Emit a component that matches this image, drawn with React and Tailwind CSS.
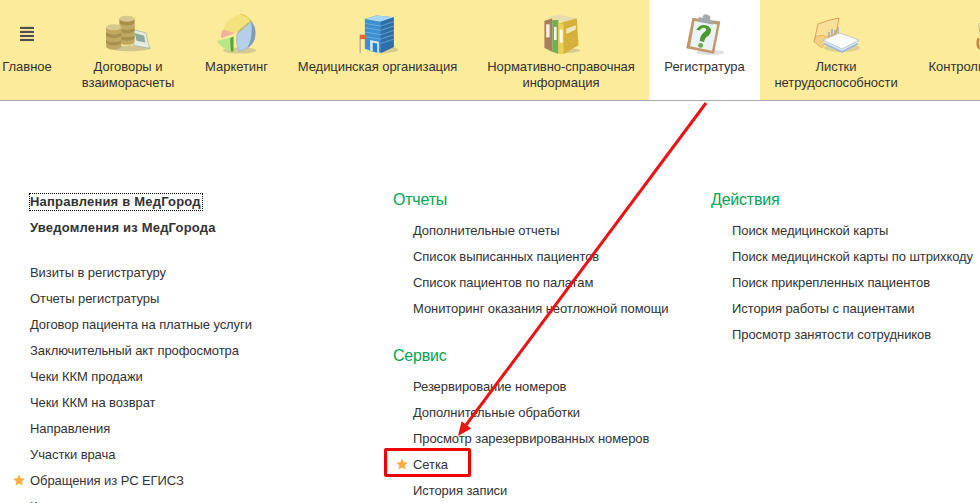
import { Fragment } from "react";

function MenuIcon() {
  return (
    <svg width="42" height="42" viewBox="0 0 48 48">
      <g fill="#4d4d4d">
        <rect x="16" y="17" width="16" height="2.4" />
        <rect x="16" y="21.6" width="16" height="2.4" />
        <rect x="16" y="26.2" width="16" height="2.4" />
        <rect x="16" y="30.8" width="16" height="2.4" />
      </g>
    </svg>
  );
}

function Stack({ x, y, rows }) {
  const items = [];
  for (let i = 0; i < rows; i++) {
    items.push(
      <Fragment key={i}>
        <path
          d={`M${x - 8} ${y - i * 4} v4 a8 3.4 0 0 0 16 0 v-4 Z`}
          fill={i % 2 ? "#a8914e" : "#bfa862"}
        />
        <ellipse cx={x} cy={y - i * 4} rx="8" ry="3.2" fill="#d8c98a" />
      </Fragment>
    );
  }
  return <g>{items}</g>;
}

function CoinsIcon() {
  return (
    <svg width="46" height="42" viewBox="0 0 48 44">
      <ellipse cx="26" cy="38" rx="22" ry="3" fill="#bfb48a" opacity=".7" />
      <path d="M28 18 L43 22 Q44 30 47 38 L30 35 Z" fill="#e6ecdf" stroke="#9fb2a5" strokeWidth=".7" />
      <path d="M31 22 L41 25 L42 32 L33 30 Z" fill="#8aa99a" />
      <Stack x="23" y="27" rows="6" />
      <Stack x="9" y="32" rows="5" />
    </svg>
  );
}

function PieIcon() {
  return (
    <svg width="42" height="42" viewBox="0 0 48 48">
      <ellipse cx="27" cy="44" rx="19" ry="3.5" fill="#c8bd8c" opacity=".7" />
      <path d="M24 25 L28 2 Q38 4 43 14 Z" fill="#d9bf55" />
      <path d="M22 24 L8 22 Q12 6 28 3 Q36 4 39 10 Z" fill="#f3e27e" />
      <path d="M22 24 L6 30 Q5 26 8 20 Z" fill="#f0b199" />
      <path d="M24 25 L40 11 Q47 18 44 31 Q40 42 26 45 Q22 36 24 25 Z" fill="#b4cfe6" stroke="#8aa6c4" strokeWidth=".6" />
      <path d="M40 11 Q47 18 44 31 Q42 37 36 41 Q43 26 40 11 Z" fill="#7f9cb8" />
      <path d="M20 28 L20 45 Q8 44 1 33 Z" fill="#b9e58b" />
      <path d="M20 28 L20 45 L17 45 L16 30 Z" fill="#58a63a" />
    </svg>
  );
}

function BuildingIcon() {
  return (
    <svg width="42" height="42" viewBox="0 0 48 48">
      <ellipse cx="30" cy="43" rx="17" ry="4" fill="#c8bd8c" opacity=".7" />
      <path d="M9 8 L22 4 L42 6 L42 40 L24 47 L9 42 Z" fill="#3d8fd0" />
      <path d="M9 8 L22 4 L42 6 L27 11 Z" fill="#a9d6f2" />
      <path d="M27 11 L42 6 L42 40 L27 47 Z" fill="#2f6eaa" />
      <g stroke="#8cc4ea" strokeWidth=".8" opacity=".8">
        <path d="M9 13 L27 16 M9 18 L27 21 M9 23 L27 26 M9 28 L27 31 M27 16 L42 11 M27 21 L42 16 M27 26 L42 21 M27 31 L42 26 M27 36 L42 31" />
      </g>
      <path d="M15 32 L25 34 L25 47 L15 44 Z" fill="#d6e4ec" />
      <path d="M18 35 L23 36 L23 46 L18 45 Z" fill="#2a82c2" />
      <rect x="3" y="26" width="1.2" height="21" fill="#a59c86" />
      <rect x="3.5" y="26" width="7" height="5" fill="#e46a33" />
    </svg>
  );
}

function FoldersIcon() {
  return (
    <svg width="42" height="42" viewBox="0 0 48 48">
      <ellipse cx="28" cy="44" rx="18" ry="3" fill="#c8bd8c" opacity=".7" />
      <path d="M8 6 L20 3 L43 7 L27 11 Z" fill="#e9dcae" />
      <path d="M5 10 L14 7 L14 45 L5 41 Z" fill="#a87f5d" />
      <rect x="7" y="14" width="4" height="15" fill="#f4efe3" />
      <path d="M14 9 L21 9 L21 48 L14 45 Z" fill="#74ad53" />
      <rect x="16" y="17" width="3" height="15" fill="#f2f6ea" />
      <path d="M21 13 L42 7 L44 38 L27 48 L21 47 Z" fill="#d5b03a" />
      <path d="M21 13 L27 13 L27 48 L21 47 Z" fill="#ead258" />
      <rect x="22.5" y="20" width="3.5" height="15" fill="#fbf7e4" />
      <path d="M30 19 L41 15 L41 20 L30 25 Z" fill="#ece5bf" />
    </svg>
  );
}

function ClipboardIcon() {
  return (
    <svg width="42" height="44" viewBox="0 0 48 50">
      <ellipse cx="30" cy="46" rx="16" ry="3" fill="#c9c9c9" opacity=".6" />
      <path d="M10 7 L41 11 L34 47 L3 41 Z" fill="#c39a69" stroke="#a67f50" strokeWidth=".6" />
      <path d="M12 10 L38 14 L32 44 L7 39 Z" fill="#eaf3f8" />
      <path d="M17 5 L21 7 Q22 1 27 3 Q31 4 30 9 L34 11 L33 14 L16 11 Z" fill="#a5a9ac" />
      <path d="M14 20 Q19 12 28 16 Q34 20 28 27 Q23 30 23 34 L18 33 Q18 27 23 23 Q27 20 24 18 Q20 17 18 21 Z" fill="#4e9a2f" />
      <circle cx="19" cy="38" r="2.8" fill="#6aac45" />
    </svg>
  );
}

function PapersIcon() {
  return (
    <svg width="48" height="42" viewBox="0 0 48 42">
      <ellipse cx="30" cy="36" rx="18" ry="4" fill="#c8bd8c" opacity=".6" />
      <path d="M2 30 L6 12 Q16 8 27 6 L24 22 Z" fill="#f8e09a" stroke="#d9a24f" />
      <path d="M2 30 L4 24 Q12 22 18 26 L10 36 Z" fill="#f4cf82" stroke="#d9a24f" strokeWidth=".6" />
      <path d="M11 32 L28 25 L47 32 L30 41 Z" fill="#9dbbd8" />
      <path d="M11 30 L28 23 L47 30 L30 39 Z" fill="#dbe7f2" />
      <path d="M11 28 L28 21 L47 28 L30 37 Z" fill="#fbfbf7" stroke="#8ca7c4" strokeWidth=".5" />
      <path d="M17 24 v-4 M20 23 v-6 M23 22 v-4 M26 21 v-6" stroke="#9aa6b0" strokeWidth="1.4" />
    </svg>
  );
}

function PartialIcon() {
  return (
    <svg width="42" height="42" viewBox="0 0 48 48">
      <path d="M3 30 Q0 40 6 42 Q10 44 14 40" fill="none" stroke="#bd8a45" strokeWidth="3" />
      <path d="M3 14 Q12 6 30 10 L28 46 L6 34 Z" fill="#f4efdc" stroke="#bdb38c" />
    </svg>
  );
}

const TABS = [
  { label: ["Главное"], icon: MenuIcon, className: "w-[65px] pr-[11px]" },
  { label: ["Договоры и", "взаиморасчеты"], icon: CoinsIcon, className: "w-[126px]" },
  { label: ["Маркетинг"], icon: PieIcon, className: "w-[91px]" },
  { label: ["Медицинская организация"], icon: BuildingIcon, className: "w-[191px]" },
  { label: ["Нормативно-справочная", "информация"], icon: FoldersIcon, className: "w-[176px]" },
  { label: ["Регистратура"], icon: ClipboardIcon, className: "w-[111px] bg-white" },
  { label: ["Листки", "нетрудоспособности"], icon: PapersIcon, className: "w-[152px]" },
  { label: ["Контрольно-кассовая"], icon: PartialIcon, className: "w-[170px]", labelClass: "-ml-[8px]" },
];

const LEFT_BOLD = ["Направления в МедГород", "Уведомления из МедГорода"];
const LEFT_ITEMS = [
  { text: "Визиты в регистратуру" },
  { text: "Отчеты регистратуры" },
  { text: "Договор пациента на платные услуги" },
  { text: "Заключительный акт профосмотра" },
  { text: "Чеки ККМ продажи" },
  { text: "Чеки ККМ на возврат" },
  { text: "Направления" },
  { text: "Участки врача" },
  { text: "Обращения из РС ЕГИСЗ", star: true },
  { text: "Карты" },
];
const REPORTS = [
  { text: "Дополнительные отчеты" },
  { text: "Список выписанных пациентов" },
  { text: "Список пациентов по палатам" },
  { text: "Мониторинг оказания неотложной помощи" },
];
const SERVICE = [
  { text: "Резервирование номеров" },
  { text: "Дополнительные обработки" },
  { text: "Просмотр зарезервированных номеров" },
  { text: "Сетка", star: true },
  { text: "История записи" },
];
const ACTIONS = [
  { text: "Поиск медицинской карты" },
  { text: "Поиск медицинской карты по штрихкоду" },
  { text: "Поиск прикрепленных пациентов" },
  { text: "История работы с пациентами" },
  { text: "Просмотр занятости сотрудников" },
];

function Star() {
  return (
    <svg className="absolute left-[-17px] top-[6px]" width="12" height="12" viewBox="0 0 24 24">
      <path d="M12 1 L15.3 8.6 L23.5 9.4 L17.3 14.9 L19.1 23 L12 18.8 L4.9 23 L6.7 14.9 L0.5 9.4 L8.7 8.6 Z" fill="#f9ad3c" />
    </svg>
  );
}

function LinkList({ items }) {
  return (
    <ul className="flex flex-col tracking-[-0.08px]">
      {items.map((item) => (
        <li key={item.text} className="relative h-[26px] leading-[26px] whitespace-nowrap">
          {item.star && <Star />}
          {item.text}
        </li>
      ))}
    </ul>
  );
}

function Heading({ children, className = "-ml-[20px]" }) {
  return <h2 className={`h-[26px] leading-[26px] text-[16px] tracking-[-0.2px] text-[#00a650] ${className}`}>{children}</h2>;
}

export default function App() {
  return (
    <div className="relative h-[503px] w-[980px] overflow-hidden bg-white text-[13px] text-[#333333] font-['Liberation_Sans',Arial,sans-serif]">
      <nav className="flex h-[101px] overflow-hidden border-b border-[#a9a9a9] bg-[#fbeb9b]">
        {TABS.map((tab) => {
          const Icon = tab.icon;
          return (
            <div
              key={tab.label[0]}
              className={`flex shrink-0 flex-col items-center pt-[12px] tracking-[-0.05px] ${tab.className}`}
            >
              <div className="flex h-[42px] items-start justify-center">
                <Icon />
              </div>
              <div className={`mt-[5px] text-center leading-[16px] whitespace-nowrap ${tab.labelClass || ""}`}>
                {tab.label.map((line) => (
                  <div key={line}>{line}</div>
                ))}
              </div>
            </div>
          );
        })}
      </nav>

      <main className="flex pt-[86px]">
        <section className="w-[413px] pl-[30px]">
          <div className="pt-[1px] font-bold tracking-[0.2px]">
            <div className="h-[26px] leading-[26px]">
              <span className="-ml-[1px] inline-block h-[18px] border border-dotted border-black pr-[1px] align-middle leading-[16px]">
                {LEFT_BOLD[0]}
              </span>
            </div>
            <div className="mt-[1px] h-[26px] leading-[26px]">{LEFT_BOLD[1]}</div>
          </div>
          <div className="mt-[19px]">
            <LinkList items={LEFT_ITEMS} />
          </div>
        </section>
        <section className="w-[319px]">
          <Heading>Отчеты</Heading>
          <div className="mt-[5px]">
            <LinkList items={REPORTS} />
          </div>
          <div className="mt-[21px]">
            <Heading>Сервис</Heading>
          </div>
          <div className="mt-[5px]">
            <LinkList items={SERVICE} />
          </div>
        </section>
        <section>
          <Heading className="-ml-[21px]">Действия</Heading>
          <div className="mt-[5px]">
            <LinkList items={ACTIONS} />
          </div>
        </section>
      </main>

      {/* annotation drawn over the screenshot */}
      <div className="absolute left-[384px] top-[448px] h-[29px] w-[87px] rounded-[2px] border-[3px] border-[#f00000]" />
      <svg className="absolute left-0 top-0 pointer-events-none" width="980" height="503" viewBox="0 0 980 503">
        <line x1="706" y1="103" x2="466" y2="425" stroke="#ee1111" strokeWidth="3" />
        <path d="M458 436 L461.6 421.2 L471.2 428.4 Z" fill="#ee1111" />
      </svg>
    </div>
  );
}
